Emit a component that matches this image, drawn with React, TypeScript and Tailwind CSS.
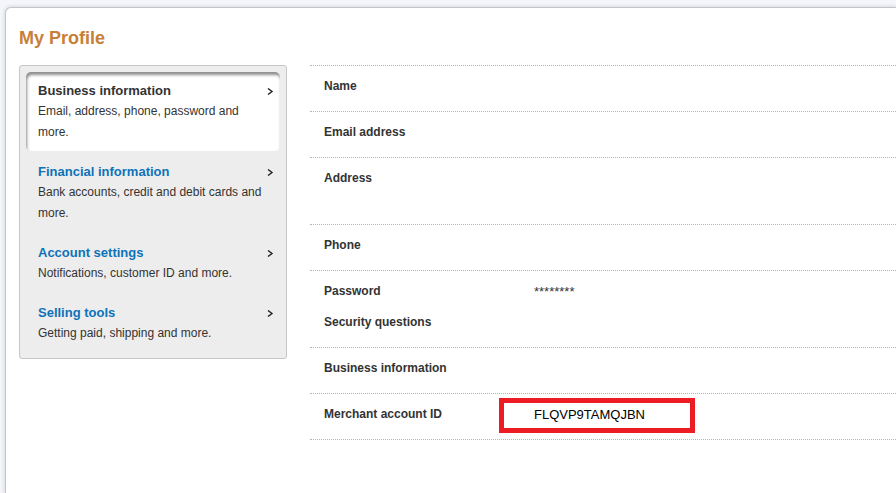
import React from 'react';

type Section = { title: string; description: string; active?: boolean };

const sections: Section[] = [
  { title: 'Business information', description: 'Email, address, phone, password and more.', active: true },
  { title: 'Financial information', description: 'Bank accounts, credit and debit cards and more.' },
  { title: 'Account settings', description: 'Notifications, customer ID and more.' },
  { title: 'Selling tools', description: 'Getting paid, shipping and more.' },
];

function Chevron() {
  return (
    <svg className="mt-2 h-[7px] w-[7px] shrink-0" viewBox="0 0 7 7" fill="none" stroke="#222222" strokeWidth="1.4" aria-hidden="true">
      <path d="M1 0.5 L5 3.5 L1 6.5" />
    </svg>
  );
}

function SectionLink({ title, description, active }: Section) {
  const surface = active
    ? 'bg-white shadow-[inset_1px_3px_3px_0px_#8e8e8e]'
    : '';
  return (
    <li>
      <a href="#" aria-current={active ? 'page' : undefined} className={`block rounded-[5px] py-2 pr-[6px] pl-3 ${surface}`}>
        <span className="flex justify-between">
          <span className={`text-[13px] leading-[21px] font-bold ${active ? 'text-[#333333]' : 'text-[#0d72b9]'}`}>{title}</span>
          <Chevron />
        </span>
        <span className="block pr-2 text-[12px] leading-[21px] text-[#333333]">{description}</span>
      </a>
    </li>
  );
}

function Detail({ label, children }: { label: string; children?: React.ReactNode }) {
  return (
    <div className="flex">
      <dt className="w-[210px] shrink-0 text-[12px] font-bold">{label}</dt>
      <dd className="text-[13px]">{children}</dd>
    </div>
  );
}

function Group({ children }: { children: React.ReactNode }) {
  return (
    <div className="flex flex-col gap-[10px] border-t border-dotted border-[#b4b4b4] pt-[10px] pb-[14px] pl-[14px]">{children}</div>
  );
}

export default function App() {
  return (
    <div className="flex min-h-screen overflow-hidden bg-[#f4f6fb] pt-[7px] pl-[5px] font-['Liberation_Sans',Arial,sans-serif] text-[#333333]">
      <main className="min-w-0 flex-1 rounded-tl-[6px] border-t border-l border-[#c5c5c8] bg-white pt-[18px] pl-[13px] shadow-[0_0_4px_#c9cbd2]">
        <h1 className="text-[18px] leading-6 font-bold text-[#c88039]">My Profile</h1>
        <div className="mt-[15px] flex items-start gap-[23px]">
          <nav aria-label="Profile sections" className="w-[268px] shrink-0 rounded-[3px] border border-[#c6c6c6] bg-[#ededed] p-[6px]">
            <ul className="flex flex-col gap-[2px]">
              {sections.map((section) => (
                <SectionLink key={section.title} {...section} />
              ))}
            </ul>
          </nav>
          <dl className="min-w-0 flex-1 border-b border-dotted border-[#b4b4b4] leading-[21px]">
            <Group><Detail label="Name" /></Group>
            <Group><Detail label="Email address" /></Group>
            <Group>
              <Detail label="Address">
                <span className="block h-[42px]" />
              </Detail>
            </Group>
            <Group><Detail label="Phone" /></Group>
            <Group>
              <Detail label="Password">********</Detail>
              <Detail label="Security questions" />
            </Group>
            <Group><Detail label="Business information" /></Group>
            <Group>
              <Detail label="Merchant account ID">
                <span className="relative block text-black">
                  FLQVP9TAMQJBN
                  <span className="absolute -top-[6px] -left-[35px] h-[35px] w-[196px] border-[5px] border-[#ed1c24]" />
                </span>
              </Detail>
            </Group>
          </dl>
        </div>
      </main>
    </div>
  );
}
